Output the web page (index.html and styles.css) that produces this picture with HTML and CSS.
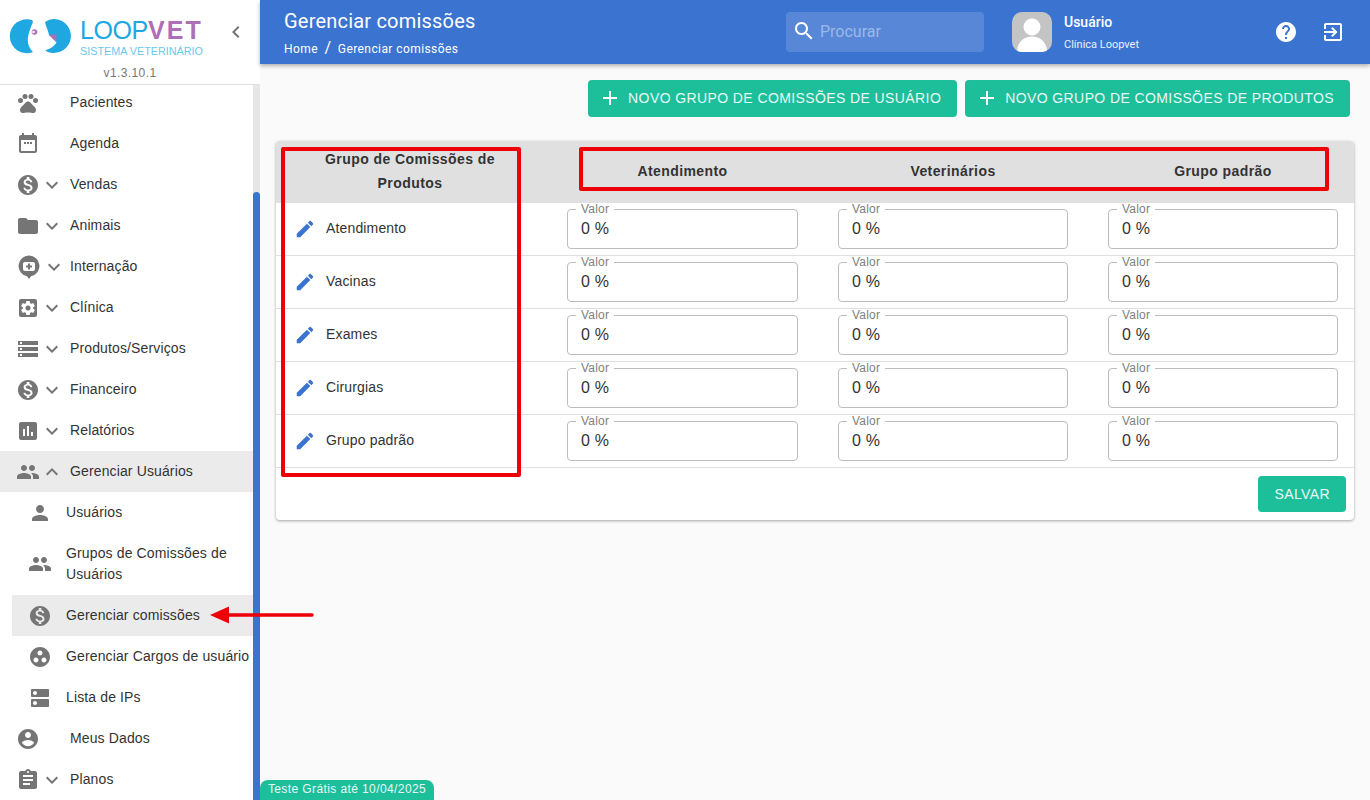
FILE: index.html
```html
<!DOCTYPE html>
<html lang="en">
<head>
    <meta charset="UTF-8">
    <meta name="viewport" content="width=device-width, initial-scale=1.0">
    <title>Gerenciar comissões</title>
    <link rel="stylesheet" href="styles.css">
</head>
<body>
    <svg class="icon-defs" xmlns="http://www.w3.org/2000/svg">
        <symbol id="i-paw" viewBox="0 0 24 24"><circle cx="4.5" cy="9.5" r="2.5"/><circle cx="9" cy="5.5" r="2.5"/><circle cx="15" cy="5.5" r="2.5"/><circle cx="19.5" cy="9.5" r="2.5"/><path d="M17.34 14.86c-.87-1.02-1.6-1.89-2.48-2.91-.46-.54-1.05-1.08-1.75-1.32-.11-.04-.22-.07-.33-.09-.25-.04-.52-.04-.78-.04s-.53 0-.79.05c-.11.02-.22.05-.33.09-.7.24-1.28.78-1.75 1.32-.87 1.02-1.6 1.89-2.48 2.91-1.31 1.31-2.92 2.76-2.62 4.79.29 1.02 1.02 2.03 2.33 2.32.73.15 3.06-.44 5.54-.44h.18c2.48 0 4.81.58 5.54.44 1.31-.29 2.04-1.31 2.33-2.32.31-2.04-1.3-3.49-2.61-4.8z"/></symbol>
        <symbol id="i-event" viewBox="0 0 24 24"><path d="M19 3h-1V1h-2v2H8V1H6v2H5c-1.11 0-1.99.9-1.99 2L3 19c0 1.1.89 2 2 2h14c1.1 0 2-.9 2-2V5c0-1.1-.9-2-2-2zm0 16H5V8h14v11z"/><path d="M8 10h2v2H8zM11 10h2v2h-2zM14 10h2v2h-2z"/></symbol>
        <symbol id="i-money" viewBox="0 0 24 24"><path d="M12 2C6.48 2 2 6.48 2 12s4.48 10 10 10 10-4.48 10-10S17.52 2 12 2zm1.41 16.09V20h-2.67v-1.93c-1.71-.36-3.16-1.46-3.27-3.4h1.96c.1 1.05.82 1.87 2.65 1.87 1.96 0 2.4-.98 2.4-1.59 0-.83-.44-1.61-2.67-2.14-2.48-.6-4.18-1.62-4.18-3.67 0-1.72 1.39-2.84 3.11-3.21V4h2.67v1.95c1.86.45 2.79 1.86 2.85 3.39H14.3c-.05-1.11-.64-1.87-2.22-1.87-1.5 0-2.4.68-2.4 1.64 0 .84.65 1.39 2.67 1.91s4.18 1.39 4.18 3.91c-.01 1.83-1.38 2.83-3.12 3.16z"/></symbol>
        <symbol id="i-folder" viewBox="0 0 24 24"><path d="M10 4H4c-1.1 0-1.99.9-1.99 2L2 18c0 1.1.9 2 2 2h16c1.1 0 2-.9 2-2V8c0-1.1-.9-2-2-2h-8l-2-2z"/></symbol>
        <symbol id="i-pin" viewBox="0 0 24 24"><path fill-rule="evenodd" d="M13 0.500a10.500 10.500 0 0 0-2 20.800L13 24l2-2.700A10.500 10.500 0 0 0 13 .5zM9 7h8c1.100 0 2 .9 2 2v5c0 1.100-.9 2-2 2H9c-1.100 0-2-.9-2-2V9c0-1.100.9-2 2-2z"/><path d="M12 8.500h2V10.500h2v2h-2v2h-2v-2h-2v-2h2z"/></symbol>
        <symbol id="i-gear" viewBox="0 0 24 24"><path d="M19 3H5c-1.11 0-2 .89-2 2v14c0 1.1.89 2 2 2h14c1.1 0 2-.9 2-2V5c0-1.11-.9-2-2-2zm-1.75 9c0 .23-.02.46-.05.68l1.48 1.16c.13.11.17.3.08.45l-1.4 2.42c-.09.15-.27.21-.43.15l-1.74-.7c-.36.28-.76.51-1.18.69l-.26 1.85c-.03.17-.18.3-.35.3h-2.8c-.17 0-.32-.13-.35-.29l-.26-1.85c-.43-.18-.82-.41-1.18-.69l-1.74.7c-.16.06-.34 0-.43-.15l-1.4-2.42c-.09-.15-.05-.34.08-.45l1.48-1.16c-.03-.23-.05-.46-.05-.69 0-.23.02-.46.05-.68l-1.48-1.16c-.13-.11-.17-.3-.08-.45l1.4-2.42c.09-.15.27-.21.43-.15l1.74.7c.36-.28.76-.51 1.18-.69l.26-1.85c.03-.17.18-.3.35-.3h2.8c.17 0 .32.13.35.29l.26 1.85c.43.18.82.41 1.18.69l1.74-.7c.16-.06.34 0 .43.15l1.4 2.42c.09.15.05.34-.08.45l-1.48 1.16c.03.23.05.46.05.69z"/><circle cx="12" cy="12" r="2.500"/></symbol>
        <symbol id="i-storage" viewBox="0 0 24 24"><path d="M2 20h20v-4H2v4zm2-3h2v2H4v-2zM2 4v4h20V4H2zm4 3H4V5h2v2zm-4 7h20v-4H2v4zm2-3h2v2H4v-2z"/></symbol>
        <symbol id="i-chart" viewBox="0 0 24 24"><path d="M19 3H5c-1.1 0-2 .9-2 2v14c0 1.1.9 2 2 2h14c1.1 0 2-.9 2-2V5c0-1.1-.9-2-2-2zM9 17H7v-7h2v7zm4 0h-2V7h2v10zm4 0h-2v-4h2v4z"/></symbol>
        <symbol id="i-people" viewBox="0 0 24 24"><path d="M16 11c1.660 0 2.990-1.340 2.990-3S17.660 5 16 5c-1.660 0-3 1.340-3 3s1.340 3 3 3zm-8 0c1.660 0 2.990-1.340 2.990-3S9.660 5 8 5C6.340 5 5 6.340 5 8s1.340 3 3 3zm0 2c-2.330 0-7 1.170-7 3.500V19h14v-2.500c0-2.330-4.670-3.500-7-3.500zm8 0c-.29 0-.62.02-.97.05 1.160.84 1.970 1.970 1.970 3.450V19h6v-2.500c0-2.330-4.670-3.500-7-3.500z"/></symbol>
        <symbol id="i-person" viewBox="0 0 24 24"><path d="M12 12c2.210 0 4-1.790 4-4s-1.790-4-4-4-4 1.790-4 4 1.790 4 4 4zm0 2c-2.670 0-8 1.340-8 4v2h16v-2c0-2.660-5.330-4-8-4z"/></symbol>
        <symbol id="i-groupwork" viewBox="0 0 24 24"><path d="M12 2C6.480 2 2 6.480 2 12s4.480 10 10 10 10-4.480 10-10S17.520 2 12 2zM8 17.500c-1.380 0-2.500-1.120-2.500-2.500s1.120-2.500 2.500-2.500 2.500 1.120 2.500 2.500-1.120 2.500-2.500 2.500zM9.500 8c0-1.380 1.120-2.500 2.500-2.500s2.500 1.120 2.500 2.500-1.120 2.500-2.500 2.500S9.500 9.380 9.500 8zm6.500 9.500c-1.380 0-2.500-1.120-2.500-2.500s1.120-2.500 2.500-2.500 2.500 1.120 2.500 2.500-1.120 2.500-2.500 2.500z"/></symbol>
        <symbol id="i-dns" viewBox="0 0 24 24"><path d="M20 13H4c-.55 0-1 .45-1 1v6c0 .55.45 1 1 1h16c.55 0 1-.45 1-1v-6c0-.55-.45-1-1-1zM7 19c-1.100 0-2-.9-2-2s.9-2 2-2 2 .9 2 2-.9 2-2 2zM20 3H4c-.55 0-1 .45-1 1v6c0 .55.45 1 1 1h16c.55 0 1-.45 1-1V4c0-.55-.45-1-1-1zM7 9c-1.100 0-2-.9-2-2s.9-2 2-2 2 .9 2 2-.9 2-2 2z"/></symbol>
        <symbol id="i-account" viewBox="0 0 24 24"><path d="M12 2C6.480 2 2 6.480 2 12s4.480 10 10 10 10-4.480 10-10S17.520 2 12 2zm0 3c1.660 0 3 1.340 3 3s-1.340 3-3 3-3-1.340-3-3 1.340-3 3-3zm0 14.200c-2.500 0-4.710-1.280-6-3.220.03-1.990 4-3.080 6-3.080 1.990 0 5.970 1.090 6 3.080-1.290 1.940-3.500 3.220-6 3.220z"/></symbol>
        <symbol id="i-clipboard" viewBox="0 0 24 24"><path d="M19 3h-4.180C14.400 1.840 13.300 1 12 1c-1.300 0-2.400.84-2.820 2H5c-1.100 0-2 .9-2 2v14c0 1.100.9 2 2 2h14c1.100 0 2-.9 2-2V5c0-1.100-.9-2-2-2zm-7 0c.55 0 1 .45 1 1s-.45 1-1 1-1-.45-1-1 .45-1 1-1zm2 14H7v-2h7v2zm3-4H7v-2h10v2zm0-4H7V7h10v2z"/></symbol>
        <symbol id="i-down" viewBox="0 0 24 24"><path d="M16.590 8.590L12 13.170 7.410 8.590 6 10l6 6 6-6z"/></symbol>
        <symbol id="i-up" viewBox="0 0 24 24"><path d="M12 8l-6 6 1.410 1.410L12 10.830l4.590 4.580L18 14z"/></symbol>
        <symbol id="i-left" viewBox="0 0 24 24"><path d="M15.410 7.410L14 6l-6 6 6 6 1.410-1.410L10.830 12z"/></symbol>
        <symbol id="i-edit" viewBox="0 0 24 24"><path d="M3 17.250V21h3.750L17.810 9.940l-3.750-3.750L3 17.250zM20.710 7.040c.39-.39.39-1.020 0-1.410l-2.340-2.340c-.39-.39-1.020-.39-1.410 0l-1.830 1.830 3.750 3.750 1.830-1.830z"/></symbol>
        <symbol id="i-search" viewBox="0 0 24 24"><path d="M15.500 14h-.79l-.28-.27C15.410 12.590 16 11.110 16 9.500 16 5.910 13.090 3 9.500 3S3 5.910 3 9.500 5.910 16 9.500 16c1.610 0 3.090-.59 4.230-1.570l.27.28v.79l5 4.990L20.490 19l-4.990-5zm-6 0C7.010 14 5 11.990 5 9.500S7.010 5 9.500 5 14 7.010 14 9.500 11.990 14 9.500 14z"/></symbol>
        <symbol id="i-help" viewBox="0 0 24 24"><path d="M12 2C6.480 2 2 6.480 2 12s4.480 10 10 10 10-4.480 10-10S17.520 2 12 2zm1 17h-2v-2h2v2zm2.070-7.750l-.9.92C13.450 12.900 13 13.500 13 15h-2v-.5c0-1.100.45-2.100 1.170-2.830l1.240-1.260c.37-.36.59-.86.59-1.410 0-1.100-.9-2-2-2s-2 .9-2 2H8c0-2.210 1.790-4 4-4s4 1.790 4 4c0 .88-.36 1.680-.93 2.250z"/></symbol>
        <symbol id="i-exit" viewBox="0 0 24 24"><path d="M10.090 15.590L11.500 17l5-5-5-5-1.410 1.410L12.670 11H3v2h9.670l-2.580 2.590zM19 3H5c-1.110 0-2 .9-2 2v4h2V5h14v14H5v-4H3v4c0 1.100.89 2 2 2h14c1.100 0 2-.9 2-2V5c0-1.100-.9-2-2-2z"/></symbol>
        <symbol id="i-plus" viewBox="0 0 24 24"><path d="M19 13h-6v6h-2v-6H5v-2h6V5h2v6h6v2z"/></symbol>
    </svg>

    <aside class="sidebar">
        <div class="brand">
            <div class="brand-row">
                <svg class="logo-mark" viewBox="0 0 64 36">
                    <path fill="#1ea7e1" d="M23 1A17 17 0 1 0 24 33C20 29 18 24 19 18C20 12 22 8 24 3z"/>
                    <path fill="#1ea7e1" d="M36 3C39 1 42 0 45 0A17 17 0 1 1 36 31.500C41 30 46 27 47.500 23L40 16C39 11 37 8 36 3z"/>
                    <path fill="#ad6fb5" d="M40 16L47.500 15.500C47.800 19 47.500 21 47 23z"/>
                    <circle cx="25.500" cy="13" r="2.800" fill="#ad6fb5"/>
                    <circle cx="24.500" cy="13" r="1.300" fill="#fff"/>
                </svg>
                <div class="brand-text">
                    <div class="brand-name">LOOP<b>VET</b></div>
                    <div class="brand-sub">SISTEMA VETERINÁRIO</div>
                </div>
                <svg class="icon collapse"><use href="#i-left"/></svg>
            </div>
            <div class="version">v1.3.10.1</div>
        </div>

        <div class="menu-scroll">
            <nav class="menu">
                <a class="item"><svg class="icon"><use href="#i-paw"/></svg><span class="spacer"></span>Pacientes</a>
                <a class="item"><svg class="icon"><use href="#i-event"/></svg><span class="spacer"></span>Agenda</a>
                <a class="item"><svg class="icon"><use href="#i-money"/></svg><svg class="icon"><use href="#i-down"/></svg>Vendas</a>
                <a class="item"><svg class="icon"><use href="#i-folder"/></svg><svg class="icon"><use href="#i-down"/></svg>Animais</a>
                <a class="item wide-icon"><svg class="icon"><use href="#i-pin"/></svg><svg class="icon"><use href="#i-down"/></svg>Internação</a>
                <a class="item"><svg class="icon"><use href="#i-gear"/></svg><svg class="icon"><use href="#i-down"/></svg>Clínica</a>
                <a class="item"><svg class="icon"><use href="#i-storage"/></svg><svg class="icon"><use href="#i-down"/></svg>Produtos/Serviços</a>
                <a class="item"><svg class="icon"><use href="#i-money"/></svg><svg class="icon"><use href="#i-down"/></svg>Financeiro</a>
                <a class="item"><svg class="icon"><use href="#i-chart"/></svg><svg class="icon"><use href="#i-down"/></svg>Relatórios</a>
                <a class="item open"><svg class="icon"><use href="#i-people"/></svg><svg class="icon"><use href="#i-up"/></svg>Gerenciar Usuários</a>
                <a class="item sub"><svg class="icon"><use href="#i-person"/></svg>Usuários</a>
                <a class="item sub tall"><svg class="icon"><use href="#i-people"/></svg>Grupos de Comissões de Usuários</a>
                <a class="item sub open"><svg class="icon"><use href="#i-money"/></svg>Gerenciar comissões</a>
                <a class="item sub"><svg class="icon"><use href="#i-groupwork"/></svg>Gerenciar Cargos de usuário</a>
                <a class="item sub"><svg class="icon"><use href="#i-dns"/></svg>Lista de IPs</a>
                <a class="item"><svg class="icon"><use href="#i-account"/></svg><span class="spacer"></span>Meus Dados</a>
                <a class="item"><svg class="icon"><use href="#i-clipboard"/></svg><svg class="icon"><use href="#i-down"/></svg>Planos</a>
            </nav>
            <div class="scrolltrack"><div class="scrollthumb"></div></div>
        </div>
    </aside>

    <div class="main">
        <header class="topbar">
            <div class="page-title">
                <h1>Gerenciar comissões</h1>
                <div class="crumbs">Home <span class="sep">/</span> Gerenciar comissões</div>
            </div>
            <div class="search">
                <svg class="icon"><use href="#i-search"/></svg>
                <span>Procurar</span>
            </div>
            <div class="avatar">
                <svg viewBox="0 0 40 40"><circle cx="20" cy="15" r="8.500"/><path d="M5 40c0-10 7-15.500 15-15.500S35 30 35 40z"/></svg>
            </div>
            <div class="user">
                <strong>Usuário</strong>
                <small>Clínica Loopvet</small>
            </div>
            <div class="top-actions">
                <svg class="icon"><use href="#i-help"/></svg>
                <svg class="icon"><use href="#i-exit"/></svg>
            </div>
        </header>

        <div class="actions">
            <button class="btn"><svg class="icon"><use href="#i-plus"/></svg>Novo grupo de comissões de usuário</button>
            <button class="btn"><svg class="icon"><use href="#i-plus"/></svg>Novo grupo de comissões de produtos</button>
        </div>

        <section class="card">
            <div class="grid head">
                <div>Grupo de Comissões de<br>Produtos</div>
                <div>Atendimento</div>
                <div>Veterinários</div>
                <div>Grupo padrão</div>
            </div>

            <div class="grid row">
                <div class="name"><svg class="icon"><use href="#i-edit"/></svg>Atendimento</div>
                <div class="field"><label>Valor</label>0 %</div>
                <div class="field"><label>Valor</label>0 %</div>
                <div class="field"><label>Valor</label>0 %</div>
            </div>
            <div class="grid row">
                <div class="name"><svg class="icon"><use href="#i-edit"/></svg>Vacinas</div>
                <div class="field"><label>Valor</label>0 %</div>
                <div class="field"><label>Valor</label>0 %</div>
                <div class="field"><label>Valor</label>0 %</div>
            </div>
            <div class="grid row">
                <div class="name"><svg class="icon"><use href="#i-edit"/></svg>Exames</div>
                <div class="field"><label>Valor</label>0 %</div>
                <div class="field"><label>Valor</label>0 %</div>
                <div class="field"><label>Valor</label>0 %</div>
            </div>
            <div class="grid row">
                <div class="name"><svg class="icon"><use href="#i-edit"/></svg>Cirurgias</div>
                <div class="field"><label>Valor</label>0 %</div>
                <div class="field"><label>Valor</label>0 %</div>
                <div class="field"><label>Valor</label>0 %</div>
            </div>
            <div class="grid row">
                <div class="name"><svg class="icon"><use href="#i-edit"/></svg>Grupo padrão</div>
                <div class="field"><label>Valor</label>0 %</div>
                <div class="field"><label>Valor</label>0 %</div>
                <div class="field"><label>Valor</label>0 %</div>
            </div>

            <div class="card-foot">
                <button class="btn save">Salvar</button>
            </div>
        </section>
    </div>

    <div class="trial">Teste Grátis até 10/04/2025</div>

    <!-- marcacoes vermelhas por cima da tela -->
    <div class="mark mark-left"></div>
    <div class="mark mark-head"></div>
    <svg class="mark-arrow" viewBox="0 0 110 20">
        <path d="M19 1.500L0 10l19 8.500z" fill="#ed0008"/>
        <path d="M16 10h86" stroke="#ed0008" stroke-width="3.500" stroke-linecap="round"/>
    </svg>
</body>
</html>
```

FILE: styles.css
```css
* {
    box-sizing: border-box;
}

body {
    display: flex;
    height: 100vh;
    margin: 0;
    overflow: hidden;
    background-color: #fafafa;
    color: #333;
    font-family: "Liberation Sans", Arial, sans-serif;
    font-size: 14px;
}

.icon-defs {
    display: none;
}

.icon {
    flex: none;
    width: 24px;
    height: 24px;
    fill: #757575;
}

/* sidebar */
.sidebar {
    display: flex;
    flex: none;
    flex-direction: column;
    width: 260px;
    height: 100vh;
    background-color: white;
}

.brand {
    flex: none;
    height: 85px;
    padding-top: 19px;
    border-bottom: 1px solid #e0e0e0;
}

.brand-row {
    display: flex;
    align-items: flex-start;
    height: 35px;
    padding-left: 9px;
}

.logo-mark {
    flex: none;
    width: 64px;
    height: 36px;
}

.brand-text {
    width: 126px;
    margin-left: 7px;
}

.brand-name {
    height: 22px;
    color: #1ea7e1;
    font-size: 25px;
    line-height: 22px;
    letter-spacing: -0.4px;
    white-space: nowrap;
}

.brand-name b {
    color: #ad6fb5;
    font-weight: 700;
    letter-spacing: 2.1px;
}

.brand-sub {
    margin-top: 3px;
    color: #6cc7ec;
    font-size: 10.8px;
    line-height: 14px;
    white-space: nowrap;
}

.collapse {
    margin: 1px 0 0 18px;
}

.version {
    margin-top: 10px;
    color: #777;
    font-size: 12px;
    line-height: 18px;
    letter-spacing: 0.4px;
    text-align: center;
}

.menu-scroll {
    display: flex;
    flex: 1;
    overflow: hidden;
}

.menu {
    flex: 1;
    margin-top: -3px;
}

.item {
    display: flex;
    align-items: center;
    height: 41px;
    padding-left: 16px;
    letter-spacing: 0.13px;
    line-height: 21px;
}

.item .icon + .icon,
.spacer {
    flex: none;
    width: 24px;
    margin-right: 6px;
}

.item.wide-icon .icon:first-child {
    margin-right: 2px;
}

.item.wide-icon .icon + .icon {
    margin-right: 4px;
}

.item.open {
    background-color: #ebebeb;
}

.item.sub {
    margin-left: 12px;
    white-space: nowrap;
}

.item.sub .icon {
    margin-right: 14px;
}

.item.tall {
    height: 62px;
    white-space: normal;
}

.scrolltrack {
    flex: none;
    width: 7px;
    background-color: #e6e6e6;
}

.scrollthumb {
    height: 100%;
    margin-top: 107px;
    border-radius: 4px;
    background-color: #3b73d1;
}

/* top bar */
.main {
    flex: 1;
    min-width: 0;
}

.topbar {
    display: flex;
    align-items: center;
    height: 64px;
    padding: 0 25px 0 24px;
    background-color: #3b73d1;
    box-shadow: 0 2px 4px rgba(0, 0, 0, 0.3);
    color: white;
}

.page-title {
    flex: none;
    width: 502px;
    padding-top: 2px;
}

.page-title h1 {
    margin: 0 0 8px;
    font-family: Roboto, sans-serif;
    font-size: 20px;
    font-weight: 400;
    line-height: 23px;
    letter-spacing: 0.2px;
}

.crumbs {
    font-family: Roboto, sans-serif;
    font-size: 12px;
    line-height: 14px;
    letter-spacing: 0.42px;
}

.sep {
    margin: 0 3px;
    font-size: 16px;
}

.search {
    display: flex;
    flex: none;
    align-items: center;
    gap: 4px;
    width: 198px;
    height: 40px;
    padding: 0 0 2px 6px;
    border-radius: 4px;
    background-color: rgba(255, 255, 255, 0.15);
    color: rgba(255, 255, 255, 0.42);
    font-family: Roboto, sans-serif;
    font-size: 16px;
}

.search .icon {
    fill: white;
}

.avatar {
    flex: none;
    width: 40px;
    height: 40px;
    margin-left: 28px;
    overflow: hidden;
    border-radius: 10px;
    background-color: #c4c4c4;
}

.avatar svg {
    display: block;
    fill: white;
}

.user {
    display: flex;
    flex-direction: column;
    margin-left: 12px;
    font-family: Roboto, sans-serif;
}

.user strong {
    font-size: 14px;
    font-weight: 500;
    line-height: 20px;
}

.user small {
    margin-top: 6px;
    font-size: 11px;
    line-height: 14px;
    opacity: 0.9;
}

.top-actions {
    display: flex;
    gap: 23px;
    margin-left: auto;
}

.top-actions .icon {
    fill: white;
}

/* content */
.actions {
    display: flex;
    justify-content: flex-end;
    gap: 8px;
    margin-top: 16px;
    padding-right: 20px;
}

.btn {
    display: flex;
    align-items: center;
    height: 37px;
    padding: 0 16px 2px 10px;
    border: none;
    border-radius: 4px;
    background-color: #1dbf9b;
    color: #e8f8f4;
    font-family: "Liberation Sans", Arial, sans-serif;
    font-size: 14px;
    letter-spacing: 0.4px;
    text-transform: uppercase;
    cursor: pointer;
}

.btn .icon {
    margin-right: 6px;
    fill: white;
}

.card {
    margin: 24px 16px 0;
    overflow: hidden;
    border-radius: 4px;
    background-color: white;
    box-shadow: 0 1px 3px rgba(0, 0, 0, 0.35);
}

.grid {
    display: grid;
    grid-template-columns: 271px 271px 270px 266px;
}

.head {
    align-items: center;
    height: 62px;
    padding-bottom: 2px;
    background-color: #e0e0e0;
    font-weight: 700;
    line-height: 24px;
    letter-spacing: 0.42px;
    text-align: center;
}

.head > div {
    padding: 0 20px;
}

.head > div:first-child {
    padding: 0 3px 0 0;
}

.head > div:last-child {
    padding: 0 16px 0 20px;
}

.row {
    height: 53px;
    padding: 6px 0;
    border-bottom: 1px solid #e0e0e0;
}

.name {
    display: flex;
    align-items: center;
    gap: 10px;
    height: 38px;
    padding: 0 0 0 18px;
    letter-spacing: 0.15px;
}

.name .icon {
    width: 22px;
    height: 22px;
    margin-top: 2px;
    fill: #3b73d1;
}

.field {
    position: relative;
    width: 230px;
    height: 40px;
    margin-left: 20px;
    padding-left: 13px;
    border: 1px solid #bdbdbd;
    border-radius: 4px;
    font-size: 16px;
    line-height: 37px;
    letter-spacing: 0.2px;
}

.name + .field {
    width: 231px;
}

.field label {
    position: absolute;
    top: -7px;
    left: 8px;
    padding: 0 5px;
    background-color: white;
    color: #808080;
    font-size: 12px;
    line-height: 12px;
}

.card-foot {
    display: flex;
    justify-content: flex-end;
    height: 52px;
    padding: 8px 8px 0 0;
}

.save {
    height: 36px;
    padding: 0 16px;
}

/* overlays */
.trial {
    position: absolute;
    bottom: 0;
    left: 260px;
    width: 174px;
    height: 20px;
    border-radius: 8px 8px 0 0;
    background-color: #1dbf9b;
    color: #e8f8f4;
    font-size: 12px;
    line-height: 18px;
    letter-spacing: 0.4px;
    text-align: center;
}

.mark {
    position: absolute;
    border: 4px solid #ed0008;
    border-radius: 2px;
}

.mark-left {
    top: 147px;
    left: 281px;
    width: 240px;
    height: 330px;
}

.mark-head {
    top: 147px;
    left: 579px;
    width: 750px;
    height: 44px;
}

.mark-arrow {
    position: absolute;
    top: 605px;
    left: 210px;
    width: 110px;
    height: 20px;
}
```
